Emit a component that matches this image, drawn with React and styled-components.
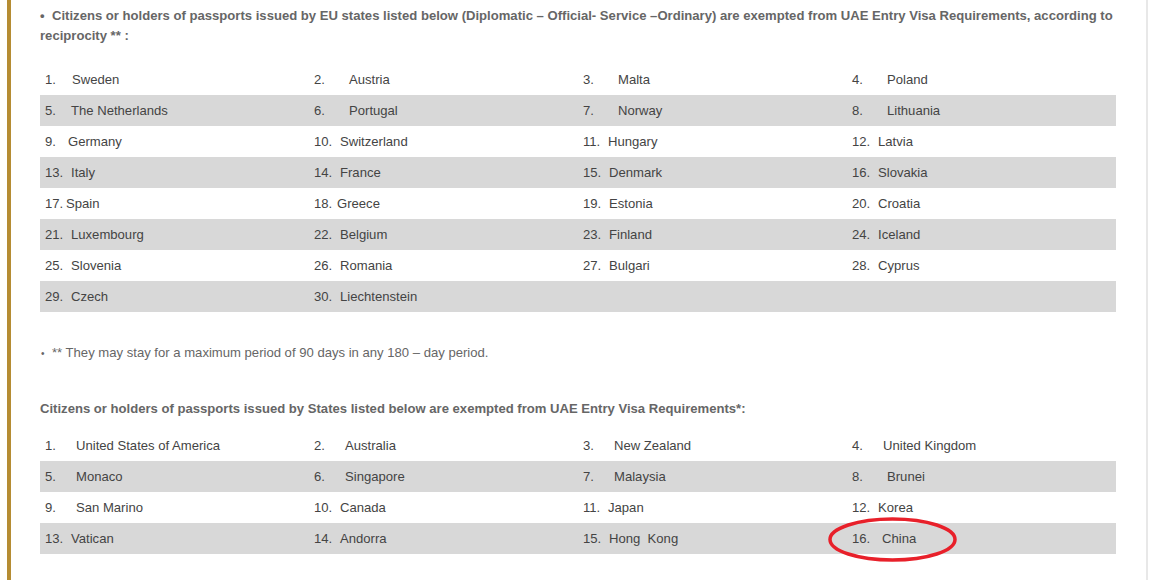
import React from "react";
import styled, { createGlobalStyle } from "styled-components";

const Global = createGlobalStyle`
  html, body { margin: 0; padding: 0; background: #fff; }
  body { font-family: "Liberation Sans", Arial, sans-serif; }
`;

const Page = styled.div`
  height: 580px;
  overflow: hidden;
  padding-left: 7px;
  box-sizing: border-box;
`;

const Frame = styled.div`
  width: 1141px;
  height: 100%;
  box-sizing: border-box;
  border-left: 4px solid #b58c33;
  border-right: 2px solid #e8e8e8;
  padding: 6px 30px 0 29px;
`;

const Heading = styled.p`
  margin: ${(p) => p.$top || 0}px 0 0;
  font-size: 13.1px;
  font-weight: bold;
  line-height: 20px;
  color: #666;
`;

const Note = styled.p`
  margin: 31px 0 0;
  padding-left: 1px;
  font-size: 13.1px;
  line-height: 20px;
  color: #666;
`;

const Bullet = styled.span`
  display: inline-block;
  font-size: ${(p) => p.$size || 13}px;
  width: ${(p) => p.$w}px;
`;

const Table = styled.div`
  display: grid;
  grid-template-columns: repeat(4, 269px);
  margin-top: ${(p) => p.$top}px;
`;

const Cell = styled.div`
  position: relative;
  display: flex;
  align-items: center;
  height: 31px;
  padding-left: 5px;
  font-size: 13.1px;
  color: #444;
  background: ${(p) => (p.$shade ? "#d8d8d8" : "#fff")};
  white-space: pre;
`;

const Num = styled.span`
  display: inline-block;
  width: ${(p) => p.$w}px;
  flex: none;
`;

const Ring = styled.svg`
  position: absolute;
  left: -19px;
  top: -6px;
  width: 129px;
  height: 45px;
  overflow: visible;
  pointer-events: none;
`;

const eu = [
  [["1.", "Sweden", 32], ["2.", "Austria", 40], ["3.", "Malta", 40], ["4.", "Poland", 40]],
  [["5.", "The Netherlands", 31], ["6.", "Portugal", 40], ["7.", "Norway", 40], ["8.", "Lithuania", 40]],
  [["9.", "Germany", 28], ["10.", "Switzerland", 31], ["11.", "Hungary", 30], ["12.", "Latvia", 31]],
  [["13.", "Italy", 31], ["14.", "France", 31], ["15.", "Denmark", 31], ["16.", "Slovakia", 31]],
  [["17.", "Spain", 26], ["18.", "Greece", 28], ["19.", "Estonia", 31], ["20.", "Croatia", 31]],
  [["21.", "Luxembourg", 31], ["22.", "Belgium", 31], ["23.", "Finland", 31], ["24.", "Iceland", 31]],
  [["25.", "Slovenia", 31], ["26.", "Romania", 31], ["27.", "Bulgari", 31], ["28.", "Cyprus", 31]],
  [["29.", "Czech", 31], ["30.", "Liechtenstein", 31], null, null],
];

const others = [
  [["1.", "United States of America", 36], ["2.", "Australia", 36], ["3.", "New Zealand", 36], ["4.", "United Kingdom", 36]],
  [["5.", "Monaco", 36], ["6.", "Singapore", 36], ["7.", "Malaysia", 36], ["8.", "Brunei", 40]],
  [["9.", "San Marino", 36], ["10.", "Canada", 31], ["11.", "Japan", 30], ["12.", "Korea", 31]],
  [["13.", "Vatican", 31], ["14.", "Andorra", 31], ["15.", "Hong  Kong", 31], ["16.", "China", 35, true]],
];

function CountryTable({ rows, top }) {
  return (
    <Table $top={top}>
      {rows.map((row, r) =>
        row.map((c, i) => (
          <Cell key={`${r}-${i}`} $shade={r % 2 === 1}>
            {c && (
              <>
                <Num $w={c[2] - 5}>{c[0]}</Num>
                <span>{c[1]}</span>
                {c[3] && (
                  <Ring viewBox="0 0 129 45">
                    <ellipse cx="64.5" cy="22.5" rx="62.5" ry="20.5" fill="none" stroke="#e8202a" strokeWidth="3.5" />
                  </Ring>
                )}
              </>
            )}
          </Cell>
        ))
      )}
    </Table>
  );
}

export default function App() {
  return (
    <>
      <Global />
      <Page>
        <Frame>
          <Heading>
            <Bullet $w={12}>•</Bullet>
            Citizens or holders of passports issued by EU states listed below (Diplomatic – Official- Service –Ordinary) are exempted from UAE Entry Visa Requirements, according to reciprocity ** :
          </Heading>
          <CountryTable rows={eu} top={18} />
          <Note>
            <Bullet $size={10} $w={11}>•</Bullet>
            ** They may stay for a maximum period of 90 days in any 180 – day period.
          </Note>
          <Heading $top={35}>
            Citizens or holders of passports issued by States listed below are exempted from UAE Entry Visa Requirements*:
          </Heading>
          <CountryTable rows={others} top={11} />
        </Frame>
      </Page>
    </>
  );
}
